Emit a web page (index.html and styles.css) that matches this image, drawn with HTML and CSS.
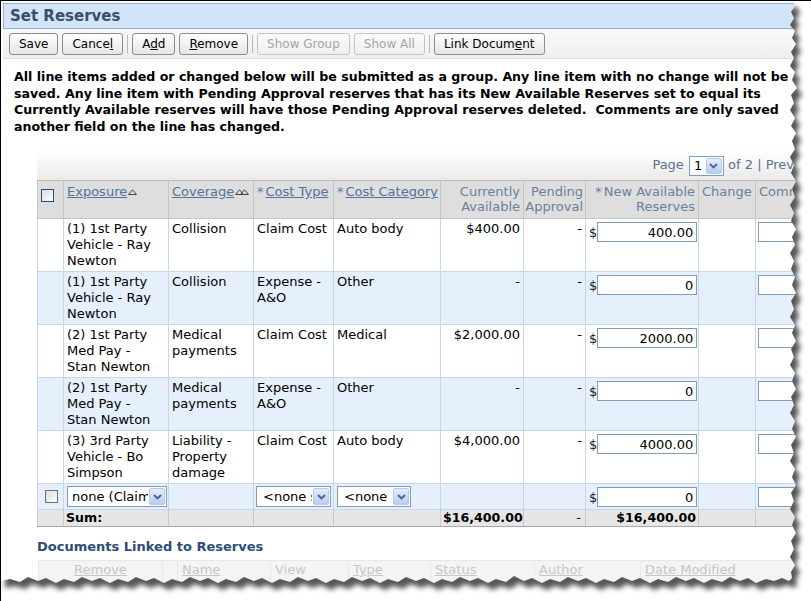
FILE: index.html
```html
<!DOCTYPE html>
<html>
<head>
<meta charset="utf-8">
<title>Set Reserves</title>
<link rel="stylesheet" href="styles.css">
</head>
<body>
<div class="frame">
  <div class="page">
    <div class="titlebar"><h1 class="title">Set Reserves</h1></div>
    <div class="toolbar">
      <button class="btn">Save</button>
      <button class="btn">Cance<u>l</u></button>
      <span class="sep"></span>
      <button class="btn">A<u>d</u>d</button>
      <button class="btn"><u>R</u>emove</button>
      <span class="sep"></span>
      <button class="btn" disabled>Show Group</button>
      <button class="btn" disabled>Show All</button>
      <span class="sep"></span>
      <button class="btn">Link Docum<u>e</u>nt</button>
    </div>
    <p class="notice">All line items added or changed below will be submitted as a group. Any line item with no change will not be<br>saved. Any line item with Pending Approval reserves that has its New Available Reserves set to equal its<br>Currently Available reserves will have those Pending Approval reserves deleted.&nbsp; Comments are only saved<br>another field on the line has changed.</p>

    <div class="grid">
      <div class="pager">Page <span class="sel pagesel"><span class="sel-text">1</span><span class="dd"><svg width="9" height="6" viewBox="0 0 9 6"><path d="M1 1 L4.5 4.5 L8 1" fill="none" stroke="#4d6185" stroke-width="1.8"/></svg></span></span> of 2 | Prev | Next</div>
      <table class="reserves">
        <colgroup>
          <col class="c-cb"><col class="c-exp"><col class="c-cov"><col class="c-type"><col class="c-cat"><col class="c-cur"><col class="c-pend"><col class="c-new"><col class="c-chg"><col class="c-com">
        </colgroup>
        <thead>
          <tr>
            <th class="cb-cell"><span class="check check-head"></span></th>
            <th><a>Exposure</a><svg class="sorti" width="9" height="6" viewBox="0 0 9 6"><path d="M0.5 5.5 L4.5 0.8 L8.5 5.5 Z" fill="none" stroke="#444"/></svg></th>
            <th><a>Coverage</a><svg class="sorti" width="14" height="6" viewBox="0 0 14 6"><path d="M0.5 5.5 L4.5 0.8 L8.5 5.5 Z M5.5 5.5 L9.5 0.8 L13.5 5.5 Z" fill="none" stroke="#444"/></svg></th>
            <th><span class="req">*</span><a>Cost Type</a></th>
            <th><span class="req">*</span><a>Cost Category</a></th>
            <th class="num">Currently<br>Available</th>
            <th class="num tight">Pending<br>Approval</th>
            <th class="num"><span class="req">*</span>New Available<br>Reserves</th>
            <th>Change</th>
            <th>Comments</th>
          </tr>
        </thead>
        <tbody>
          <tr>
            <td></td>
            <td class="exp">(1) 1st Party Vehicle - Ray Newton</td>
            <td>Collision</td>
            <td>Claim Cost</td>
            <td>Auto body</td>
            <td class="num">$400.00</td>
            <td class="num">-</td>
            <td class="new"><span class="newval"><span class="cur">$</span><input class="amt" value="400.00"></span></td>
            <td></td>
            <td><input class="comment" value=""></td>
          </tr>
          <tr>
            <td></td>
            <td class="exp">(1) 1st Party Vehicle - Ray Newton</td>
            <td>Collision</td>
            <td>Expense - A&amp;O</td>
            <td>Other</td>
            <td class="num">-</td>
            <td class="num">-</td>
            <td class="new"><span class="newval"><span class="cur">$</span><input class="amt" value="0"></span></td>
            <td></td>
            <td><input class="comment" value=""></td>
          </tr>
          <tr>
            <td></td>
            <td class="exp">(2) 1st Party Med Pay - Stan Newton</td>
            <td>Medical payments</td>
            <td>Claim Cost</td>
            <td>Medical</td>
            <td class="num">$2,000.00</td>
            <td class="num">-</td>
            <td class="new"><span class="newval"><span class="cur">$</span><input class="amt" value="2000.00"></span></td>
            <td></td>
            <td><input class="comment" value=""></td>
          </tr>
          <tr>
            <td></td>
            <td class="exp">(2) 1st Party Med Pay - Stan Newton</td>
            <td>Medical payments</td>
            <td>Expense - A&amp;O</td>
            <td>Other</td>
            <td class="num">-</td>
            <td class="num">-</td>
            <td class="new"><span class="newval"><span class="cur">$</span><input class="amt" value="0"></span></td>
            <td></td>
            <td><input class="comment" value=""></td>
          </tr>
          <tr>
            <td></td>
            <td class="exp">(3) 3rd Party Vehicle - Bo Simpson</td>
            <td>Liability - Property damage</td>
            <td>Claim Cost</td>
            <td>Auto body</td>
            <td class="num">$4,000.00</td>
            <td class="num">-</td>
            <td class="new"><span class="newval"><span class="cur">$</span><input class="amt" value="4000.00"></span></td>
            <td></td>
            <td><input class="comment" value=""></td>
          </tr>
          <tr class="newrow">
            <td class="cb-cell"><span class="check"></span></td>
            <td><span class="sel sel-exp"><span class="sel-text">none (Claim-level)</span><span class="dd"><svg width="9" height="6" viewBox="0 0 9 6"><path d="M1 1 L4.5 4.5 L8 1" fill="none" stroke="#4d6185" stroke-width="1.8"/></svg></span></span></td>
            <td></td>
            <td><span class="sel sel-type"><span class="sel-text">&lt;none selected&gt;</span><span class="dd"><svg width="9" height="6" viewBox="0 0 9 6"><path d="M1 1 L4.5 4.5 L8 1" fill="none" stroke="#4d6185" stroke-width="1.8"/></svg></span></span></td>
            <td><span class="sel sel-cat"><span class="sel-text">&lt;none selected&gt;</span><span class="dd"><svg width="9" height="6" viewBox="0 0 9 6"><path d="M1 1 L4.5 4.5 L8 1" fill="none" stroke="#4d6185" stroke-width="1.8"/></svg></span></span></td>
            <td></td>
            <td></td>
            <td class="new"><span class="newval"><span class="cur">$</span><input class="amt" value="0"></span></td>
            <td></td>
            <td><input class="comment" value=""></td>
          </tr>
          <tr class="sum">
            <td></td>
            <td>Sum:</td>
            <td></td>
            <td></td>
            <td></td>
            <td class="num">$16,400.00</td>
            <td class="num dash">-</td>
            <td class="num">$16,400.00</td>
            <td></td>
            <td></td>
          </tr>
        </tbody>
      </table>
    </div>

    <h2 class="docs-title">Documents Linked to Reserves</h2>
    <table class="docs">
      <colgroup>
        <col class="d1"><col class="d2"><col class="d3"><col class="d4"><col class="d5"><col class="d6"><col class="d7"><col class="d8">
      </colgroup>
      <tr>
        <th class="center"><a>Remove</a></th>
        <th></th>
        <th><a>Name</a></th>
        <th>View</th>
        <th><a>Type</a></th>
        <th><a>Status</a></th>
        <th><a>Author</a></th>
        <th><a>Date Modified</a></th>
      </tr>
    </table>
  </div>

  <svg class="torn" width="811" height="601" viewBox="0 0 811 601">
    <defs>
      <filter id="blur" x="-10%" y="-10%" width="120%" height="120%"><feGaussianBlur stdDeviation="2.4"/></filter>
      <clipPath id="outside"><path clip-rule="evenodd" d="M0 0H811V601H0Z M0,0 L792,0 L795,6 L791,12 L794,18 L790,25 L795,31 L792,38 L796,44 L791,52 L794,58 L790,66 L795,72 L792,80 L797,88 L791,95 L794,103 L790,110 L795,118 L791,126 L796,133 L792,141 L795,149 L790,157 L794,165 L791,173 L796,181 L792,189 L795,197 L790,205 L794,213 L791,221 L796,229 L792,237 L795,245 L790,253 L794,261 L791,269 L795,277 L792,285 L796,293 L791,301 L794,309 L790,317 L795,325 L792,333 L796,341 L791,349 L794,357 L790,365 L795,373 L792,381 L796,389 L791,397 L794,405 L790,413 L795,421 L792,429 L796,437 L791,445 L794,453 L790,461 L795,469 L792,477 L796,485 L791,493 L794,501 L790,509 L795,517 L792,525 L796,533 L791,541 L794,549 L790,557 L795,565 L791,572 L792,578 L789,581 L782,578 L774,581 L766,579 L756,583 L748,578 L740,581 L730,577 L722,582 L712,579 L704,583 L694,578 L686,581 L676,577 L668,582 L658,579 L650,583 L640,578 L632,581 L622,577 L614,582 L604,579 L596,583 L586,578 L578,581 L568,577 L560,582 L550,579 L542,583 L532,578 L524,581 L514,576 L506,582 L496,579 L488,583 L478,578 L470,581 L460,577 L452,582 L442,579 L434,583 L424,578 L416,581 L406,577 L398,582 L388,579 L380,583 L370,578 L362,581 L352,577 L344,582 L334,579 L326,583 L316,578 L308,581 L298,577 L290,582 L280,579 L272,583 L262,578 L254,581 L244,577 L236,582 L226,579 L218,583 L208,578 L200,581 L190,577 L182,582 L172,579 L164,583 L154,578 L146,581 L136,577 L128,582 L118,579 L110,583 L100,578 L92,581 L82,577 L74,582 L64,579 L56,583 L46,578 L38,581 L28,577 L20,582 L10,579 L0,581 Z"/></clipPath>
    </defs>
    <path fill="#fff" fill-rule="evenodd" d="M0 0H811V601H0Z M0,0 L792,0 L795,6 L791,12 L794,18 L790,25 L795,31 L792,38 L796,44 L791,52 L794,58 L790,66 L795,72 L792,80 L797,88 L791,95 L794,103 L790,110 L795,118 L791,126 L796,133 L792,141 L795,149 L790,157 L794,165 L791,173 L796,181 L792,189 L795,197 L790,205 L794,213 L791,221 L796,229 L792,237 L795,245 L790,253 L794,261 L791,269 L795,277 L792,285 L796,293 L791,301 L794,309 L790,317 L795,325 L792,333 L796,341 L791,349 L794,357 L790,365 L795,373 L792,381 L796,389 L791,397 L794,405 L790,413 L795,421 L792,429 L796,437 L791,445 L794,453 L790,461 L795,469 L792,477 L796,485 L791,493 L794,501 L790,509 L795,517 L792,525 L796,533 L791,541 L794,549 L790,557 L795,565 L791,572 L792,578 L789,581 L782,578 L774,581 L766,579 L756,583 L748,578 L740,581 L730,577 L722,582 L712,579 L704,583 L694,578 L686,581 L676,577 L668,582 L658,579 L650,583 L640,578 L632,581 L622,577 L614,582 L604,579 L596,583 L586,578 L578,581 L568,577 L560,582 L550,579 L542,583 L532,578 L524,581 L514,576 L506,582 L496,579 L488,583 L478,578 L470,581 L460,577 L452,582 L442,579 L434,583 L424,578 L416,581 L406,577 L398,582 L388,579 L380,583 L370,578 L362,581 L352,577 L344,582 L334,579 L326,583 L316,578 L308,581 L298,577 L290,582 L280,579 L272,583 L262,578 L254,581 L244,577 L236,582 L226,579 L218,583 L208,578 L200,581 L190,577 L182,582 L172,579 L164,583 L154,578 L146,581 L136,577 L128,582 L118,579 L110,583 L100,578 L92,581 L82,577 L74,582 L64,579 L56,583 L46,578 L38,581 L28,577 L20,582 L10,579 L0,581 Z"/>
    <g clip-path="url(#outside)">
      <path transform="translate(5,7)" fill="#3a3a3a" fill-opacity="0.85" filter="url(#blur)" d="M0,0 L792,0 L795,6 L791,12 L794,18 L790,25 L795,31 L792,38 L796,44 L791,52 L794,58 L790,66 L795,72 L792,80 L797,88 L791,95 L794,103 L790,110 L795,118 L791,126 L796,133 L792,141 L795,149 L790,157 L794,165 L791,173 L796,181 L792,189 L795,197 L790,205 L794,213 L791,221 L796,229 L792,237 L795,245 L790,253 L794,261 L791,269 L795,277 L792,285 L796,293 L791,301 L794,309 L790,317 L795,325 L792,333 L796,341 L791,349 L794,357 L790,365 L795,373 L792,381 L796,389 L791,397 L794,405 L790,413 L795,421 L792,429 L796,437 L791,445 L794,453 L790,461 L795,469 L792,477 L796,485 L791,493 L794,501 L790,509 L795,517 L792,525 L796,533 L791,541 L794,549 L790,557 L795,565 L791,572 L792,578 L789,581 L782,578 L774,581 L766,579 L756,583 L748,578 L740,581 L730,577 L722,582 L712,579 L704,583 L694,578 L686,581 L676,577 L668,582 L658,579 L650,583 L640,578 L632,581 L622,577 L614,582 L604,579 L596,583 L586,578 L578,581 L568,577 L560,582 L550,579 L542,583 L532,578 L524,581 L514,576 L506,582 L496,579 L488,583 L478,578 L470,581 L460,577 L452,582 L442,579 L434,583 L424,578 L416,581 L406,577 L398,582 L388,579 L380,583 L370,578 L362,581 L352,577 L344,582 L334,579 L326,583 L316,578 L308,581 L298,577 L290,582 L280,579 L272,583 L262,578 L254,581 L244,577 L236,582 L226,579 L218,583 L208,578 L200,581 L190,577 L182,582 L172,579 L164,583 L154,578 L146,581 L136,577 L128,582 L118,579 L110,583 L100,578 L92,581 L82,577 L74,582 L64,579 L56,583 L46,578 L38,581 L28,577 L20,582 L10,579 L0,581 Z"/>
    </g>
  </svg>
</div>
</body>
</html>
```

FILE: styles.css
```css
* { box-sizing: border-box; }

html, body {
  margin: 0;
  padding: 0;
  background: #fff;
}

body {
  font-family: "DejaVu Sans", Verdana, sans-serif;
  font-size: 13px;
  color: #000;
}

.frame {
  position: relative;
  width: 811px;
  height: 601px;
  overflow: hidden;
  border-top: 1px solid #000;
  border-left: 1px solid #000;
}

.page {
  width: 1000px;
  padding: 2px 0 0 2px;
}

/* title bar */
.titlebar {
  height: 26px;
  background: #d1e4f8;
  border: 1px solid #88b1e0;
  display: flex;
  align-items: center;
  padding-left: 6px;
}

.title {
  margin: 0;
  font-size: 15px;
  font-weight: bold;
  color: #3b4d6a;
}

/* toolbar */
.toolbar {
  height: 30px;
  display: flex;
  align-items: center;
  gap: 4px;
  padding-left: 6px;
  background: linear-gradient(#f9f9f9, #efefef);
  border-bottom: 1px solid #dedede;
}

.btn {
  height: 22px;
  padding: 0 9px;
  border: 1px solid #8c8c8c;
  border-radius: 3px;
  background: linear-gradient(#ffffff, #e6e6e6);
  font-family: "DejaVu Sans", Verdana, sans-serif;
  font-size: 12px;
  color: #000;
  line-height: 20px;
}

.btn:disabled {
  color: #a5a5a5;
  border-color: #c4c4c4;
  background: linear-gradient(#fbfbfb, #efefef);
}

.sep {
  width: 1px;
  height: 18px;
  background: #b8b8b8;
}

/* notice */
.notice {
  margin: 10px 0 0 11px;
  font-size: 12.6px;
  font-weight: bold;
  line-height: 16.5px;
  white-space: nowrap;
  color: #000;
}

/* grid */
.grid {
  margin: 15px 0 0 34px;
  width: 805px;
}

.pager {
  height: 30px;
  line-height: 30px;
  text-align: right;
  padding-right: 5px;
  background: linear-gradient(#ffffff, #eaeaea);
  color: #5d7190;
  white-space: nowrap;
}

.sel {
  display: inline-flex;
  align-items: center;
  height: 21px;
  border: 1px solid #7f9db9;
  background: #fff;
  overflow: hidden;
  color: #000;
  line-height: 16px;
}

.sel-text {
  flex: 1;
  min-width: 0;
  overflow: hidden;
  white-space: nowrap;
}

.dd {
  flex: none;
  width: 16px;
  height: 17px;
  margin: 1px;
  background: linear-gradient(#e4ecfe, #b9cbf5);
  border: 1px solid #b6c9f2;
  border-radius: 2px;
  display: flex;
  align-items: center;
  justify-content: center;
}

.pagesel {
  width: 35px;
  height: 20px;
  vertical-align: middle;
  margin: 0 0 0 1px;
  text-align: left;
}

.pagesel .sel-text { padding-left: 4px; }
.pagesel .dd { height: 16px; }

.reserves {
  width: 805px;
  table-layout: fixed;
  border-collapse: collapse;
}

.c-cb { width: 26px; }
.c-exp { width: 105px; }
.c-cov { width: 85px; }
.c-type { width: 80px; }
.c-cat { width: 107px; }
.c-cur { width: 83px; }
.c-pend { width: 62px; }
.c-new { width: 113px; }
.c-chg { width: 57px; }
.c-com { width: 87px; }

.reserves th {
  height: 38px;
  background: #dedede;
  border: 1px solid #c6c6c6;
  border-top-color: #bcbcbc;
  padding: 4px 3px 3px;
  vertical-align: top;
  text-align: left;
  font-weight: normal;
  white-space: nowrap;
  color: #6b809c;
  line-height: 14.5px;
}

.reserves th a {
  color: #52729a;
  text-decoration: underline;
}

.reserves th.tight { padding-right: 2px; padding-left: 1px; }

.req {
  color: #6b809c;
  margin-right: 2px;
}

.sorti {
  margin-left: 1px;
  vertical-align: 1px;
}

.reserves td {
  padding: 2px 3px;
  border: 1px solid #c5d7ec;
  vertical-align: top;
  line-height: 16px;
  background: #fff;
}

.reserves td.exp { padding-right: 9px; }

.reserves tbody tr:nth-child(even) td {
  background: #e5f0fc;
}

.reserves .num { text-align: right; }

.cb-cell { text-align: center; }

.check {
  display: inline-block;
  width: 13px;
  height: 13px;
  border: 1px solid #707070;
  background: linear-gradient(135deg, #dcdcdc, #ffffff);
  vertical-align: top;
}

.check-head {
  border-color: #1c5180;
  margin-top: 4px;
}

.newrow .check { margin-top: 4px; margin-left: 1px; }

td.new { white-space: nowrap; padding-left: 3px; padding-right: 1px; }

.newval {
  display: inline-flex;
  align-items: baseline;
  margin-top: 1px;
}

.cur { color: #1a1a1a; }

.amt, .comment {
  height: 20px;
  border: 1px solid #7f9db9;
  background: #fff;
  font-family: "DejaVu Sans", Verdana, sans-serif;
  font-size: 13px;
  color: #000;
  padding: 0 3px;
  margin: 0;
}

.amt {
  width: 100px;
  text-align: right;
}

.comment { width: 100px; margin: 1px 0 0 -1px; vertical-align: top; }

.newrow .sel { vertical-align: top; }
.sel-exp { width: 100px; }
.sel-exp .sel-text { padding-left: 4px; }
.sel-type { width: 75px; margin-left: -1px; }
.sel-type .sel-text { padding-left: 6px; }
.sel-cat { width: 74px; }
.sel-cat .sel-text { padding-left: 6px; }

.reserves tbody tr.sum td {
  background: #e6e6e6;
  border-color: #cacaca;
  border-bottom-color: #a9a9a9;
  font-weight: bold;
  font-size: 12.6px;
  padding: 0 2px;
  line-height: 16px;
}

.reserves tbody tr.sum td.dash { font-weight: normal; font-size: 13px; padding-right: 4px; }

/* documents */
.docs-title {
  margin: 12px 0 0 34px;
  font-size: 13px;
  font-weight: bold;
  line-height: 16px;
  color: #2e4b76;
}

.docs {
  margin: 5px 0 0 35px;
  border-collapse: collapse;
  table-layout: fixed;
  width: 762px;
}

.d1 { width: 124px; }
.d2 { width: 15px; }
.d3 { width: 93px; }
.d4 { width: 78px; }
.d5 { width: 82px; }
.d6 { width: 104px; }
.d7 { width: 106px; }
.d8 { width: 160px; }

.docs th {
  height: 24px;
  background: #f4f4f4;
  border: 1px solid #e8e8e8;
  color: #c9c9c9;
  font-weight: normal;
  text-align: left;
  padding: 1px 4px 3px;
  white-space: nowrap;
  line-height: 16px;
  vertical-align: top;
}

.docs th.center { text-align: center; }

.docs th a {
  color: #c6c6c6;
  text-decoration: underline;
}

/* torn paper edge overlay */
.torn {
  position: absolute;
  top: -1px;
  left: -1px;
  pointer-events: none;
}
```
